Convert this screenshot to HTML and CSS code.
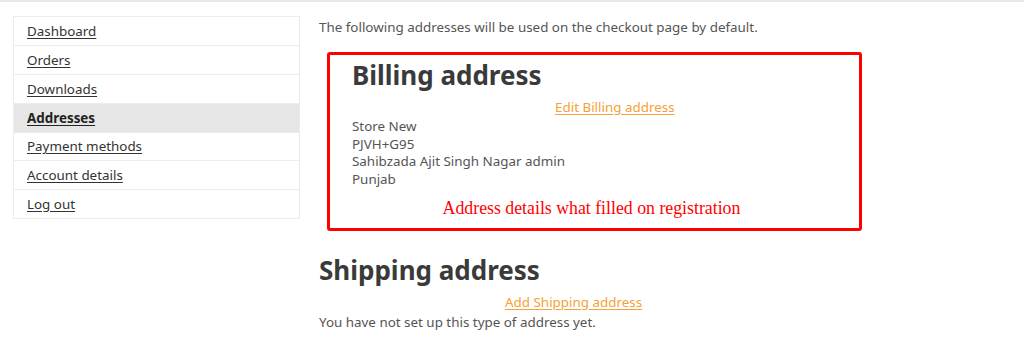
FILE: index.html
```html
<!DOCTYPE html>
<html>
<head>
  <title>Addresses</title>
  <meta name="viewport" content="width=device-width, initial-scale=1">
  <link rel="stylesheet" href="styles.css">
</head>
<body>
  <div class="topline"></div>
  <div class="account">
    <nav class="account-nav">
      <ul>
        <li><a href="#">Dashboard</a></li>
        <li><a href="#">Orders</a></li>
        <li><a href="#">Downloads</a></li>
        <li class="active"><a href="#">Addresses</a></li>
        <li><a href="#">Payment methods</a></li>
        <li><a href="#">Account details</a></li>
        <li><a href="#">Log out</a></li>
      </ul>
    </nav>

    <div class="account-content">
      <p class="intro">The following addresses will be used on the checkout page by default.</p>

      <section class="address billing">
        <h2>Billing address</h2>
        <a class="edit" href="#">Edit Billing address</a>
        <address>
          Store New<br>
          PJVH+G95<br>
          Sahibzada Ajit Singh Nagar admin<br>
          Punjab
        </address>
        <div class="note">Address details what filled on registration</div>
      </section>

      <section class="address shipping">
        <h2>Shipping address</h2>
        <a class="edit" href="#">Add Shipping address</a>
        <p>You have not set up this type of address yet.</p>
      </section>
    </div>
  </div>
</body>
</html>
```

FILE: styles.css
```css
* {padding: 0; margin: 0; box-sizing: border-box;}
html {font-family: "Noto Sans", Arial, sans-serif; font-size: 13.4px; color: #555;}

body {margin: 0; background: #fff;}

.topline {height: 2px; background-color: #e8e8e8;}

.account {display: flex; align-items: flex-start; padding: 14px 0 0 13px;}

.account-nav {width: 287px; flex: none; border: 1px solid #ececec;}
.account-nav ul {list-style: none;}
.account-nav li {height: 28.85px; display: flex; align-items: center; padding-left: 13px; border-top: 1px solid #ececec;}
.account-nav li:first-child {border-top: none; height: 28px;}
.account-nav li a {color: #333; text-decoration: underline; text-underline-offset: 2px;}
.account-nav li.active {background-color: #e6e6e6;}
.account-nav li.active a {font-weight: bold; color: #222;}

.account-content {margin-left: 19px; width: 545px;}

.intro {line-height: 18px; margin-top: 2px; color: #555;}

.address h2 {font-size: 26px; line-height: 30px; font-weight: bold; color: #3a3a3a;}
.address .edit {display: block; color: #f7a035; text-decoration: underline; text-underline-offset: 2px; line-height: 18px;}
.address address {font-style: normal; line-height: 17.7px; color: #555;}

.billing {margin: 16px 0 0 8px; width: 535px; border: 3px solid #ff0000; border-radius: 3px; padding: 5px 20px 10px 22px;}
.billing .edit {margin: 8px 0 2px 203px;}
.note {font-family: "Liberation Serif", "Times New Roman", serif; font-size: 17.8px; color: #ff0000; text-align: center; margin: 9px 8px 0 0; line-height: 20px;}

.shipping {margin-top: 24px;}
.shipping .edit {margin: 8px 0 2px 186px;}
.shipping p {line-height: 18px;}
```
